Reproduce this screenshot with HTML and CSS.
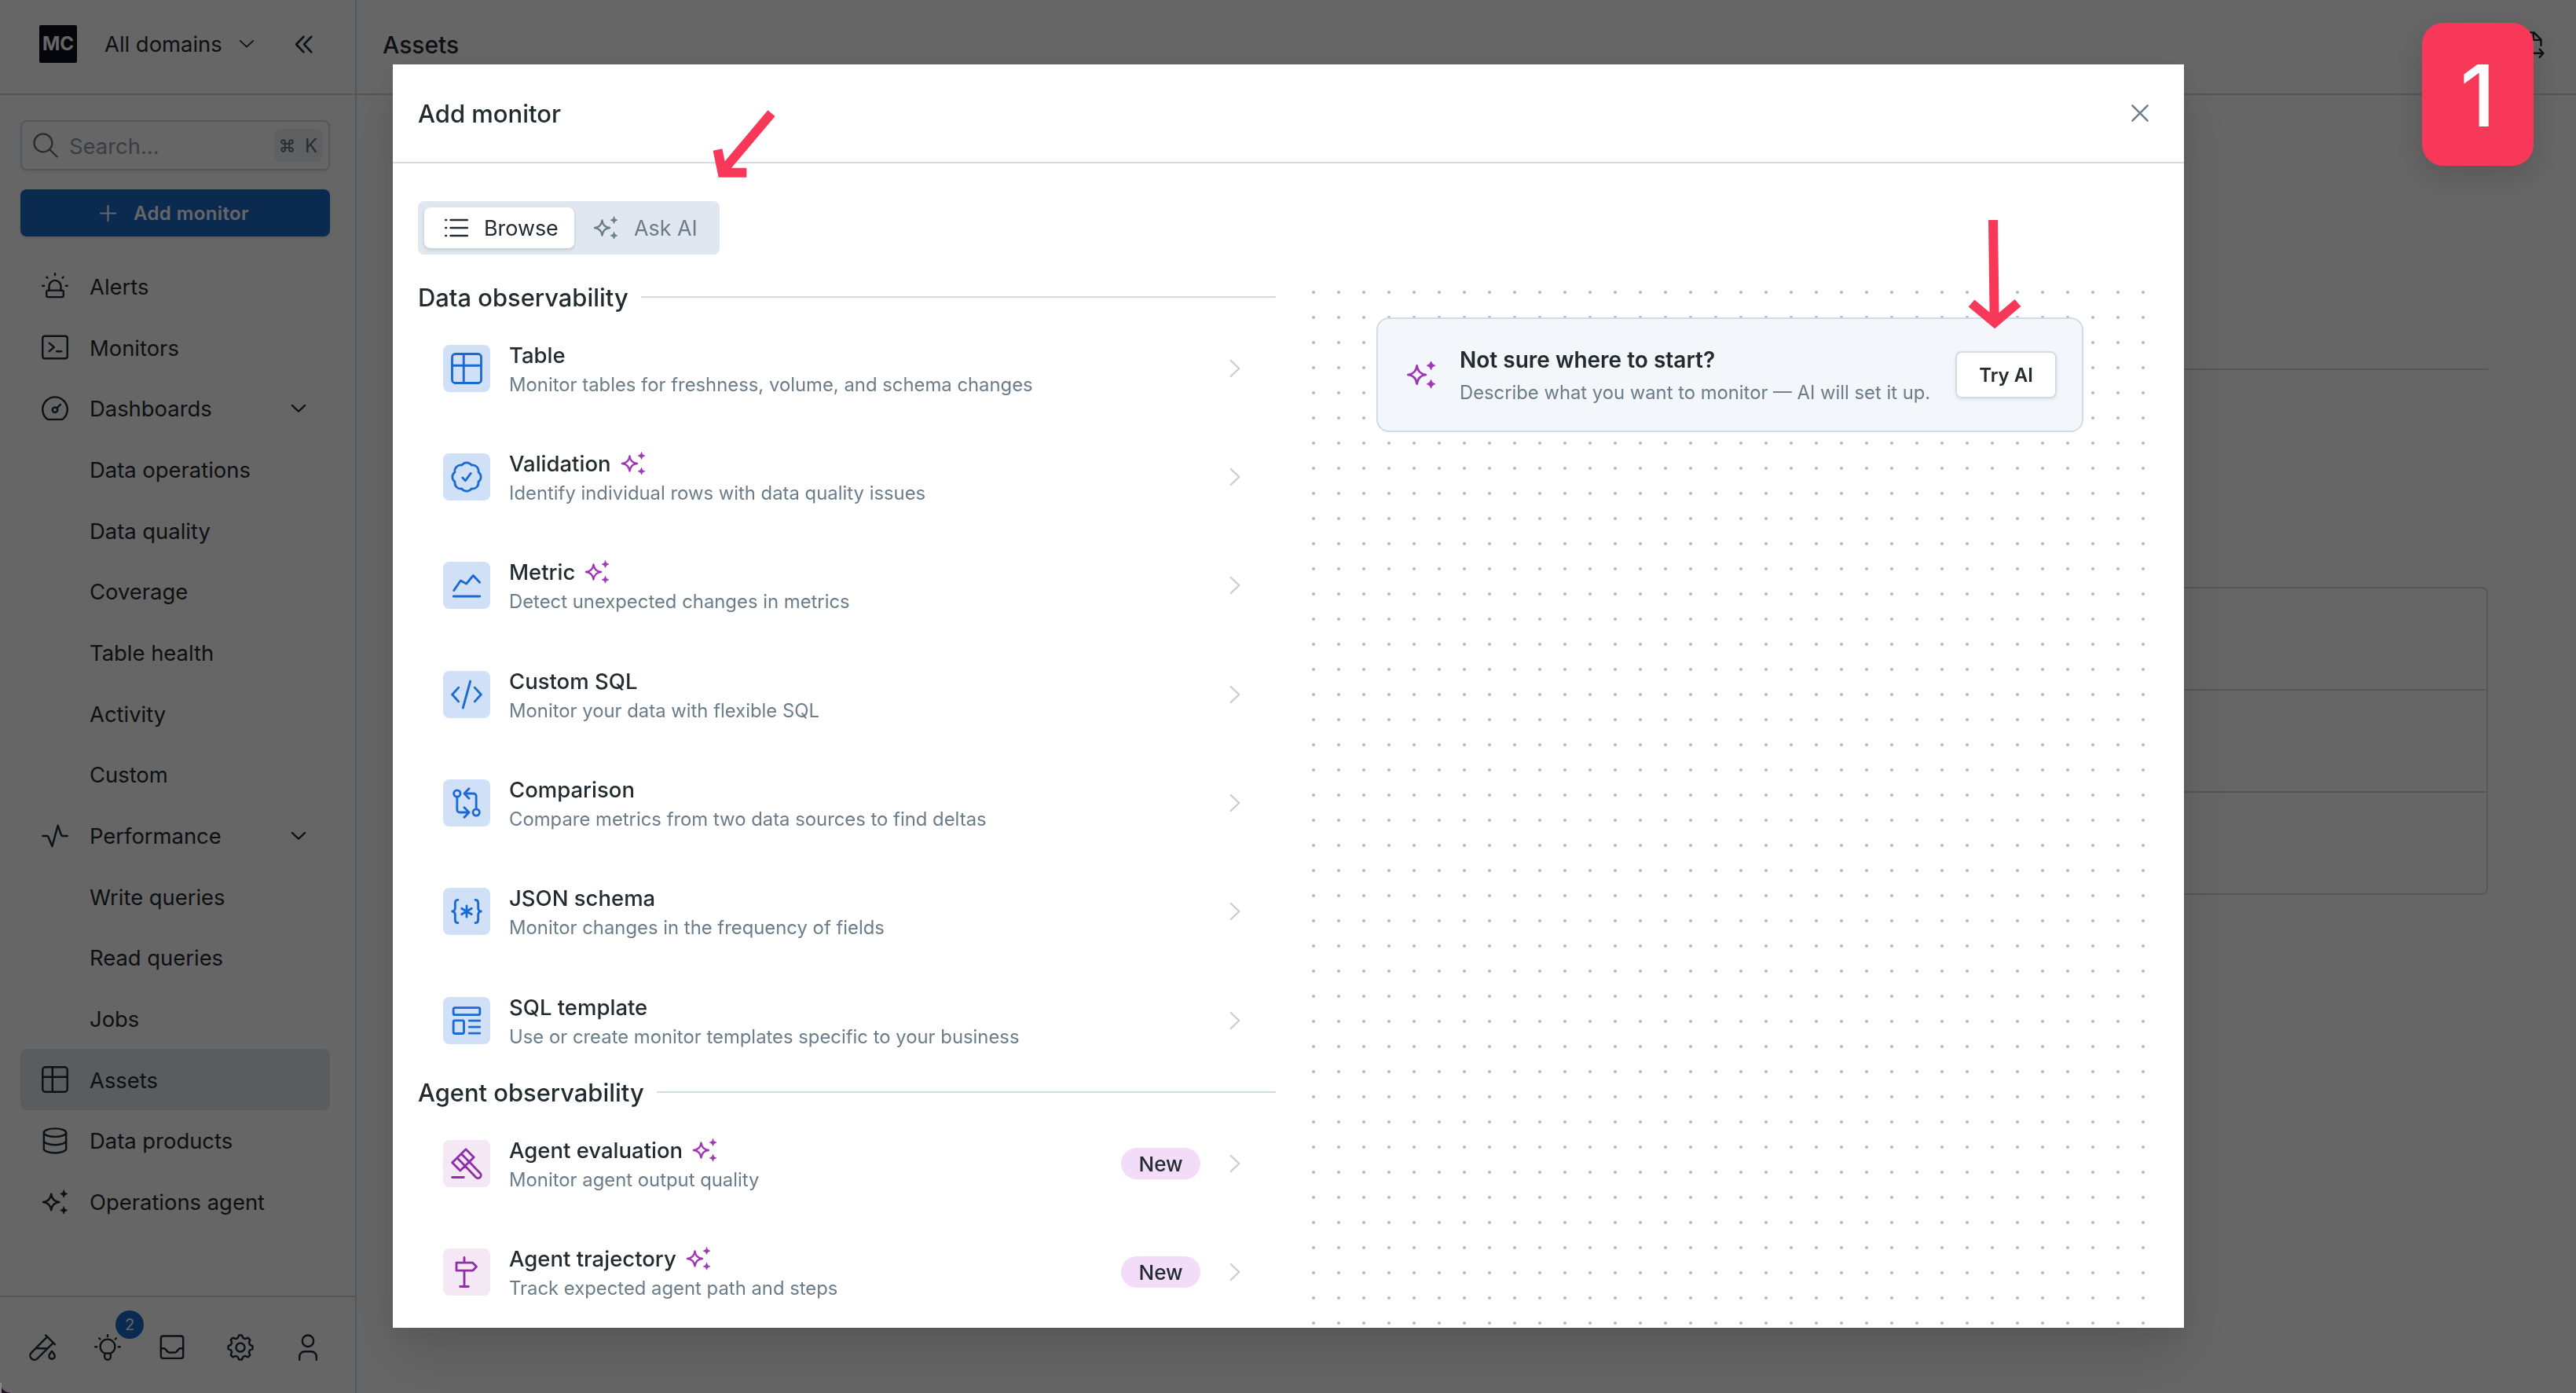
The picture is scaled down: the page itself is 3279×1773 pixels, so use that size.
FILE: index.html
```html
<!DOCTYPE html>
<html lang="en">
<head>
    <meta charset="UTF-8">
    <meta name="viewport" content="width=device-width, initial-scale=1.0">
    <title>Assets - Add monitor</title>
    <link rel="stylesheet" href="styles.css">
</head>
<body>
    <!-- Icon sprite -->
    <svg class="sprite" xmlns="http://www.w3.org/2000/svg">
        <symbol id="i-sparkle" viewBox="0 0 24 24">
            <path d="M8.6 4.7C9.1 9 11.4 11.5 15.8 12 11.4 12.5 9.1 15 8.6 19.3 8.1 15 5.8 12.5 1.4 12 5.8 11.5 8.1 9 8.6 4.7Z"/>
            <path class="solid" d="M19.9 1.4c.5 2 1.2 2.7 3.2 3.2-2 .5-2.7 1.2-3.2 3.2-.5-2-1.2-2.7-3.2-3.2 2-.5 2.7-1.2 3.2-3.2z"/>
            <path class="solid" d="M19.9 16.2c.5 2 1.2 2.7 3.2 3.2-2 .5-2.7 1.2-3.2 3.2-.5-2-1.2-2.7-3.2-3.2 2-.5 2.7-1.2 3.2-3.2z"/>
        </symbol>
        <symbol id="i-table" viewBox="0 0 24 24">
            <rect x=".9" y=".9" width="22.2" height="22.2" rx="2.4"/>
            <path d="M9.75 1v22M1 9.75h22"/>
        </symbol>
        <symbol id="i-down" viewBox="0 0 24 24"><path d="M3 7.5l9 8.5 9-8.5"/></symbol>
        <symbol id="i-right" viewBox="0 0 24 24"><path d="M8 4.5l8 7.5-8 7.5"/></symbol>
        <symbol id="i-collapse" viewBox="0 0 24 24"><path d="M12 2.5L3 12l9 9.5M21.5 2.5l-9 9.5 9 9.5"/></symbol>
        <symbol id="i-search" viewBox="0 0 24 24"><circle cx="9.7" cy="9.7" r="8.6"/><path d="M15.9 15.9l7 7"/></symbol>
        <symbol id="i-plus" viewBox="0 0 24 24"><path d="M12 1v22M1 12h22"/></symbol>
        <symbol id="i-close" viewBox="0 0 24 24"><path d="M1.5 1.5l21 21M22.5 1.5l-21 21"/></symbol>
        <symbol id="i-alert" viewBox="0 0 24 24">
            <path d="M6.7 16v-3.700a5.300 5.300 0 0 1 10.600 0V16"/>
            <rect x="4.400" y="16" width="15.200" height="6" rx="1.500"/>
            <path d="M12 .9v1.300M4.500 4l.7.7M19.500 4l-.7.7M.9 11.800h1.300M21.800 11.800h1.300"/>
        </symbol>
        <symbol id="i-terminal" viewBox="0 0 24 24">
            <rect x=".9" y="1.900" width="22.200" height="20.200" rx="2"/>
            <path d="M6.800 8.200l4.400 3.700-4.400 3.700M13.400 15.700h4.400"/>
        </symbol>
        <symbol id="i-gauge" viewBox="0 0 24 24">
            <path d="M5.500 21.800A11.100 11.100 0 1 1 18.500 21.800Z"/>
            <circle cx="12" cy="13.200" r="2.300"/><path d="M13.700 11.500l3.200-3.200"/>
        </symbol>
        <symbol id="i-pulse" viewBox="0 0 24 24"><path d="M.9 12h3.700c.7 0 1.200.3 1.500 1l3.400 8.300L14.600 2.600l2.900 8.300c.3.700.8 1.100 1.500 1.100h4.100"/></symbol>
        <symbol id="i-database" viewBox="0 0 24 24">
            <ellipse cx="12" cy="4.700" rx="10" ry="3.700"/>
            <path d="M2 4.700v14.500c0 2 4.500 3.700 10 3.700s10-1.700 10-3.700V4.700M2 12c0 2 4.500 3.700 10 3.700s10-1.700 10-3.700"/>
        </symbol>
        <symbol id="i-tube" viewBox="0 0 24 24">
            <path d="M14.900 1l8.300 8.300M16.300 2.400L2 16.800a3.750 3.750 0 0 0 5.300 5.300L21.700 7.800M7.300 12.900h9.200"/>
            <path d="M20.500 15.400c1.500 1.800 2.600 3 2.600 4.400a2.600 2.600 0 0 1-5.200 0c0-1.400 1.100-2.600 2.600-4.400z"/>
        </symbol>
        <symbol id="i-bulb" viewBox="0 0 24 24">
            <path d="M9.300 17.300a6.600 6.600 0 1 1 5.400 0zM9.300 17.300v3.200a2.700 2.500 0 0 0 5.400 0v-3.200"/>
            <path d="M12 .9v1.200M4.300 3.700l.9.900M19.700 3.700l-.9.900M.9 11.500h1.300M21.800 11.500h1.300"/>
        </symbol>
        <symbol id="i-inbox" viewBox="0 0 24 24">
            <rect x="2" y="1.800" width="20" height="20" rx="2"/>
            <path d="M2 12.900h2.800c1 0 1.300.6 1.900 1.400 1 1.500 1.800 2.300 3.200 2.300h4.200c1.400 0 2.200-.8 3.200-2.300.6-.8.900-1.400 1.900-1.400H22"/>
        </symbol>
        <symbol id="i-gear" viewBox="0 0 24 24">
            <circle cx="12" cy="12" r="3.900"/>
            <path d="M22.920 10.660L22.920 13.340 20.460 14.430 19.700 16.270 20.670 18.770 18.770 20.670 16.270 19.700 14.430 20.460 13.340 22.920 10.660 22.920 9.570 20.460 7.730 19.700 5.230 20.670 3.330 18.770 4.300 16.270 3.540 14.430 1.080 13.340 1.080 10.660 3.540 9.570 4.300 7.730 3.330 5.230 5.230 3.330 7.730 4.300 9.570 3.540 10.660 1.080 13.340 1.080 14.430 3.540 16.270 4.300 18.770 3.330 20.670 5.230 19.700 7.730 20.460 9.570Z"/>
        </symbol>
        <symbol id="i-user" viewBox="0 0 24 24">
            <circle cx="12" cy="6.200" r="5.100"/>
            <path d="M4.400 23.200v-3a4.500 4.500 0 0 1 4.500-4.500h6.200a4.500 4.500 0 0 1 4.500 4.500v3"/>
        </symbol>
        <symbol id="i-export" viewBox="0 0 24 24">
            <path d="M9 22H2.500V1h12l6.300 6.300V12.500M14 1v6.700h6.500M10 19.600h12.800M19.500 16l3.400 3.600-3.400 3.600"/>
        </symbol>
        <symbol id="i-list" viewBox="0 0 24 24"><path d="M6 4h17.200M6 12h17.200M6 20h17.200M1 4h.6M1 12h.6M1 20h.6"/></symbol>
        <symbol id="i-badge" viewBox="2.100 2.100 19.800 19.800">
            <path class="fine" d="M9.400 12.500l1.800 1.900 3.400-4.700M21 12c0 1.268-.63 2.390-1.593 3.068a3.745 3.745 0 0 1-1.043 3.296 3.745 3.745 0 0 1-3.296 1.043A3.745 3.745 0 0 1 12 21c-1.268 0-2.390-.63-3.068-1.593a3.746 3.746 0 0 1-3.296-1.043 3.745 3.745 0 0 1-1.043-3.296A3.745 3.745 0 0 1 3 12c0-1.268.63-2.390 1.593-3.068a3.745 3.745 0 0 1 1.043-3.296 3.746 3.746 0 0 1 3.296-1.043A3.746 3.746 0 0 1 12 3c1.268 0 2.390.63 3.068 1.593a3.746 3.746 0 0 1 3.296 1.043 3.746 3.746 0 0 1 1.043 3.296A3.745 3.745 0 0 1 21 12Z"/>
        </symbol>
        <symbol id="i-chart" viewBox="0 0 24 24"><path d="M2.200 16l5.200-7.600 4.400 2.400L17 4.500l5 5.200M1.900 20.400h20.200"/></symbol>
        <symbol id="i-code" viewBox="0 0 24 24"><path d="M5.800 6.700L1 12l4.800 5.300M18.200 6.700L23 12l-4.800 5.300M14.800 1.800L9.200 22.200"/></symbol>
        <symbol id="i-compare" viewBox="0 0 24 24">
            <circle cx="4.700" cy="4.800" r="2.500"/><circle cx="19.300" cy="19.200" r="2.500"/>
            <path d="M4.700 7.300v9.900a2 2 0 0 0 2 2h6.800M10.200 15.500l3.600 3.700-3.600 3.700M19.300 16.700V6.800a2 2 0 0 0-2-2h-6.800M13.800 1.100l-3.600 3.700 3.600 3.700"/>
        </symbol>
        <symbol id="i-json" viewBox="0 0 24 24">
            <path d="M5.400 3.200c-1.700 0-2.200.9-2.200 2.400v4c0 1.400-.9 2.400-2.200 2.400 1.300 0 2.200 1 2.200 2.400v4c0 1.500.5 2.400 2.200 2.400M18.600 3.200c1.700 0 2.200.9 2.200 2.400v4c0 1.400.9 2.400 2.200 2.400-1.300 0-2.200 1-2.200 2.400v4c0 1.500-.5 2.400-2.200 2.400M12 7.700v8.600M8.200 9.700l7.600 4.600M15.800 9.700l-7.600 4.600"/>
        </symbol>
        <symbol id="i-template" viewBox="0 0 24 24">
            <rect x="1.900" y="2.200" width="20.200" height="5.400" rx="1"/><rect x="1.900" y="11.900" width="8" height="10" rx="1"/>
            <path d="M14 12.100h8M14 16.900h8M14 21.700h8"/>
        </symbol>
        <symbol id="i-gavel" viewBox="0 0 24 24">
            <path d="M11.400 1.100L17.500 7.200 14 10.600 7.900 4.500ZM4.700 7.700L10.800 13.800 7.100 17.400 1 11.300ZM7.900 4.500L4.700 7.700M14 10.600l8.300 8.700a2.250 2.250 0 0 1-3.200 3.200L10.800 13.800M14 10.600l-3.200 3.200M1 22.500h8.800"/>
        </symbol>
        <symbol id="i-sign" viewBox="0 0 24 24"><path d="M4.200 4.900h12.400l2.900 3-2.900 3H4.200ZM10.200.9v4M10.200 10.900v12M7 23.100h6.400"/></symbol>
    </svg>

    <div class="app">
        <nav class="sidebar">
            <div class="sidebar-top">
                <div class="logo">MC</div>
                <span class="domain">All domains</span>
                <svg class="icon domain-arrow"><use href="#i-down"/></svg>
                <svg class="icon collapse"><use href="#i-collapse"/></svg>
            </div>
            <div class="sidebar-body">
                <div class="search">
                    <svg class="icon"><use href="#i-search"/></svg>
                    <span class="placeholder">Search...</span>
                    <span class="kbd"><svg class="cmd" viewBox="0 0 16 16"><path d="M5.500 5.500h5v5h-5zM5.500 5.500H3.300a2.200 2.200 0 1 1 2.200-2.200zM10.500 5.500V3.300a2.200 2.200 0 1 1 2.200 2.200zM10.500 10.500h2.200a2.200 2.200 0 1 1-2.200 2.200zM5.500 10.500v2.200a2.200 2.200 0 1 1-2.200-2.200z"/></svg><span>K</span></span>
                </div>
                <div class="add-btn"><svg class="icon"><use href="#i-plus"/></svg>Add monitor</div>
                <ul class="menu">
                    <li><svg class="icon"><use href="#i-alert"/></svg>Alerts</li>
                    <li><svg class="icon"><use href="#i-terminal"/></svg>Monitors</li>
                    <li><svg class="icon"><use href="#i-gauge"/></svg>Dashboards<svg class="icon arrow"><use href="#i-down"/></svg></li>
                    <li class="sub">Data operations</li>
                    <li class="sub">Data quality</li>
                    <li class="sub">Coverage</li>
                    <li class="sub">Table health</li>
                    <li class="sub">Activity</li>
                    <li class="sub">Custom</li>
                    <li><svg class="icon"><use href="#i-pulse"/></svg>Performance<svg class="icon arrow"><use href="#i-down"/></svg></li>
                    <li class="sub">Write queries</li>
                    <li class="sub">Read queries</li>
                    <li class="sub">Jobs</li>
                    <li class="active"><svg class="icon"><use href="#i-table"/></svg>Assets</li>
                    <li><svg class="icon"><use href="#i-database"/></svg>Data products</li>
                    <li><svg class="icon"><use href="#i-sparkle"/></svg>Operations agent</li>
                </ul>
            </div>
            <div class="sidebar-bottom">
                <svg class="icon"><use href="#i-tube"/></svg>
                <div class="tips"><svg class="icon"><use href="#i-bulb"/></svg><span class="count">2</span></div>
                <svg class="icon"><use href="#i-inbox"/></svg>
                <svg class="icon"><use href="#i-gear"/></svg>
                <svg class="icon"><use href="#i-user"/></svg>
            </div>
        </nav>
        <main class="main">
            <header class="main-top">
                <h1>Assets</h1>
                <svg class="icon"><use href="#i-export"/></svg>
            </header>
            <div class="main-body">
                <div class="rule"></div>
                <div class="rows"><div></div><div></div><div></div></div>
            </div>
        </main>
    </div>

    <div class="overlay">
        <div class="modal">
            <div class="modal-head">
                <h2>Add monitor</h2>
                <svg class="icon close"><use href="#i-close"/></svg>
            </div>
            <div class="modal-body">
                <div class="toggle">
                    <div class="tab selected"><svg class="icon list"><use href="#i-list"/></svg>Browse</div>
                    <div class="tab"><svg class="icon"><use href="#i-sparkle"/></svg>Ask AI</div>
                </div>
                <div class="columns">
                    <div class="types">
                        <div class="section"><h3>Data observability</h3></div>
                        <div class="type">
                            <div class="tile"><svg class="icon"><use href="#i-table"/></svg></div>
                            <div class="text"><h4>Table</h4><p>Monitor tables for freshness, volume, and schema changes</p></div>
                            <svg class="icon go"><use href="#i-right"/></svg>
                        </div>
                        <div class="type">
                            <div class="tile"><svg class="icon"><use href="#i-badge"/></svg></div>
                            <div class="text"><h4>Validation <svg class="icon ai"><use href="#i-sparkle"/></svg></h4><p>Identify individual rows with data quality issues</p></div>
                            <svg class="icon go"><use href="#i-right"/></svg>
                        </div>
                        <div class="type">
                            <div class="tile"><svg class="icon"><use href="#i-chart"/></svg></div>
                            <div class="text"><h4>Metric <svg class="icon ai"><use href="#i-sparkle"/></svg></h4><p>Detect unexpected changes in metrics</p></div>
                            <svg class="icon go"><use href="#i-right"/></svg>
                        </div>
                        <div class="type">
                            <div class="tile"><svg class="icon"><use href="#i-code"/></svg></div>
                            <div class="text"><h4>Custom SQL</h4><p>Monitor your data with flexible SQL</p></div>
                            <svg class="icon go"><use href="#i-right"/></svg>
                        </div>
                        <div class="type">
                            <div class="tile"><svg class="icon"><use href="#i-compare"/></svg></div>
                            <div class="text"><h4>Comparison</h4><p>Compare metrics from two data sources to find deltas</p></div>
                            <svg class="icon go"><use href="#i-right"/></svg>
                        </div>
                        <div class="type">
                            <div class="tile"><svg class="icon"><use href="#i-json"/></svg></div>
                            <div class="text"><h4>JSON schema</h4><p>Monitor changes in the frequency of fields</p></div>
                            <svg class="icon go"><use href="#i-right"/></svg>
                        </div>
                        <div class="type">
                            <div class="tile"><svg class="icon"><use href="#i-template"/></svg></div>
                            <div class="text"><h4>SQL template</h4><p>Use or create monitor templates specific to your business</p></div>
                            <svg class="icon go"><use href="#i-right"/></svg>
                        </div>
                        <div class="section"><h3>Agent observability</h3></div>
                        <div class="type agent">
                            <div class="tile"><svg class="icon"><use href="#i-gavel"/></svg></div>
                            <div class="text"><h4>Agent evaluation <svg class="icon ai"><use href="#i-sparkle"/></svg></h4><p>Monitor agent output quality</p></div>
                            <span class="new">New</span>
                            <svg class="icon go"><use href="#i-right"/></svg>
                        </div>
                        <div class="type agent">
                            <div class="tile"><svg class="icon"><use href="#i-sign"/></svg></div>
                            <div class="text"><h4>Agent trajectory <svg class="icon ai"><use href="#i-sparkle"/></svg></h4><p>Track expected agent path and steps</p></div>
                            <span class="new">New</span>
                            <svg class="icon go"><use href="#i-right"/></svg>
                        </div>
                    </div>
                    <div class="canvas">
                        <div class="hint">
                            <svg class="icon"><use href="#i-sparkle"/></svg>
                            <div class="hint-text">
                                <h4>Not sure where to start?</h4>
                                <p>Describe what you want to monitor — AI will set it up.</p>
                            </div>
                            <div class="try-btn">Try AI</div>
                        </div>
                    </div>
                </div>
            </div>
        </div>
    </div>

    <!-- Callouts -->
    <svg class="mark mark-ask" viewBox="0 0 90 90"><path d="M81 4.200L17 80M12.500 50.500L18.500 79.800H49.300"/></svg>
    <svg class="mark mark-try" viewBox="0 0 80 150"><path d="M37 10l1.700 128M9.500 116L39 140.500 68.500 115.500"/></svg>
    <div class="step">1</div>
    <div class="corner"></div>
</body>
</html>
```
FILE: styles.css
```css
* {
    box-sizing: border-box;
    margin: 0;
    padding: 0;
}
body {
    font-family: Inter, "Liberation Sans", sans-serif;
    font-size: 27.4px;
    color: #222b30;
    background: #fff;
    width: 3279px;
    height: 1773px;
    overflow: hidden;
}
.sprite {
    display: none;
}
.icon {
    width: 34px;
    height: 34px;
    flex: none;
    fill: none;
    stroke: currentColor;
    stroke-width: 1.7;
    stroke-linecap: round;
    stroke-linejoin: round;
    overflow: visible;
}
.solid {
    fill: currentColor;
    stroke-width: 0.7;
}
.fine {
    stroke-width: 1.35;
}

/* Sidebar */
.app {
    display: flex;
    height: 1773px;
}
.sidebar {
    width: 454px;
    border-right: 2px solid #d0dce8;
    display: flex;
    flex-direction: column;
}
.sidebar-top {
    height: 121px;
    border-bottom: 2px solid #d0dce8;
    display: flex;
    align-items: center;
    padding: 0 50px 7px;
}
.logo {
    width: 48px;
    height: 48px;
    border-radius: 2px;
    background: #0b1120;
    color: #fff;
    font-size: 24px;
    font-weight: 700;
    line-height: 48px;
    text-align: center;
}
.domain {
    margin-left: 35px;
    width: 170px;
    white-space: nowrap;
}
.domain-arrow {
    width: 22px;
    height: 22px;
    stroke-width: 2;
}
.collapse {
    width: 25px;
    height: 25px;
    margin-left: 49px;
    stroke-width: 2.5;
}
.sidebar-body {
    flex: 1;
    padding: 32px 32px 0 26px;
}
.search {
    height: 64px;
    border: 2px solid #d0dce8;
    border-radius: 8px;
    box-shadow: 0 2px 4px rgba(0,0,0,0.08);
    display: flex;
    align-items: center;
    padding: 0 8px 0 14px;
}
.search .icon {
    width: 32px;
    height: 32px;
    color: #5d6f80;
}
.placeholder {
    flex: 1;
    margin-left: 14px;
    padding-top: 2px;
    color: #8d9cab;
}
.kbd {
    width: 61px;
    height: 42px;
    border-radius: 8px;
    background: #edf0f5;
    color: #5d6f80;
    font-size: 24px;
    display: flex;
    align-items: center;
    justify-content: space-between;
    padding: 0 6px 0 8px;
}
.cmd {
    width: 17px;
    height: 17px;
    fill: none;
    stroke: currentColor;
    stroke-width: 1.8;
}
.add-btn {
    height: 60px;
    margin-top: 24px;
    border-radius: 8px;
    background: #196ac8;
    box-shadow: 0 2px 4px rgba(0,0,0,0.12);
    color: #fff;
    font-size: 24px;
    font-weight: 600;
    letter-spacing: 0.4px;
    display: flex;
    align-items: center;
    justify-content: center;
    gap: 22px;
    padding-right: 2px;
}
.add-btn .icon {
    width: 21px;
    height: 21px;
    stroke-width: 2.5;
}
.menu {
    list-style: none;
    margin-top: 24px;
}
.menu li {
    height: 77.7px;
    border-radius: 8px;
    display: flex;
    align-items: center;
    padding: 2px 29px 0 27px;
}
.menu .icon {
    margin: -1px 27px 0 0;
}
.menu .sub {
    padding-left: 88px;
}
.menu .active {
    background: #dfe8ef;
}
.menu .arrow {
    width: 22px;
    height: 22px;
    margin: 0 0 0 auto;
    stroke-width: 2.4;
}
.sidebar-bottom {
    height: 124px;
    border-top: 2px solid #d0dce8;
    display: grid;
    grid-template-columns: 83px 82px 87px 86px 34px;
    align-items: center;
    padding: 6px 0 0 37px;
}
.tips {
    position: relative;
    height: 34px;
}
.count {
    position: absolute;
    left: 27px;
    top: -30px;
    width: 36px;
    height: 36px;
    border-radius: 50%;
    background: #196ac8;
    color: #fff;
    font-size: 20px;
    line-height: 36px;
    text-align: center;
}

/* Page behind the dialog */
.main {
    flex: 1;
}
.main-top {
    height: 121px;
    border-bottom: 2px solid #d0dce8;
    display: flex;
    align-items: center;
    justify-content: space-between;
    padding: 0 40px 5px 33px;
}
.main-top h1 {
    font-size: 30px;
    font-weight: 500;
}
.main-body {
    padding: 348px 112px 0;
}
.rule {
    height: 2px;
    background: #d0dce8;
    margin-bottom: 276px;
}
.rows {
    border: 2px solid #d0dce8;
    border-radius: 8px;
}
.rows div {
    height: 128px;
}
.rows div + div {
    height: 130px;
    border-top: 2px solid #d0dce8;
}

/* Dialog */
.overlay {
    position: fixed;
    inset: 0;
    background: rgba(0,0,0,0.6);
    padding: 82px 499px 83px 500px;
}
.modal {
    height: 1608px;
    background: #fff;
    box-shadow: 0 40px 80px rgba(0,0,0,0.12), 0 10px 30px rgba(0,0,0,0.08);
    overflow: hidden;
}
.modal-head {
    height: 126px;
    border-bottom: 2px solid #d0dce8;
    display: flex;
    align-items: center;
    justify-content: space-between;
    padding: 0 45px 0 32px;
}
.modal-head h2, .section h3 {
    font-size: 31px;
    font-weight: 500;
}
.section h3 {
    font-size: 30.9px;
    padding-top: 2px;
}
.close {
    width: 22px;
    height: 22px;
    color: #6b7c8a;
    stroke-width: 2.6;
}
.modal-body {
    padding: 48px 32px 0;
}
.toggle {
    width: 384px;
    height: 68px;
    padding: 8px;
    border-radius: 8px;
    background: #e0e7ee;
    display: flex;
}
.tab {
    display: flex;
    align-items: center;
    gap: 20px;
    padding-left: 24px;
    height: 52px;
    font-size: 26.9px;
    color: #6b7c8a;
}
.tab .icon {
    width: 32px;
    height: 32px;
}
.tab.selected {
    width: 191px;
    padding-left: 26px;
    border-radius: 8px;
    background: #fff;
    color: #222b30;
    box-shadow: 0 2px 4px rgba(0,0,0,0.14);
}
.tab .list {
    width: 30px;
    height: 30px;
    stroke-width: 2;
}
.columns {
    display: grid;
    grid-template-columns: 1092px 1092px;
    gap: 32px;
    margin-top: 32px;
}
.section {
    height: 43.66px;
    display: flex;
    align-items: center;
    gap: 16px;
}
.section::after {
    content: "";
    flex: 1;
    height: 2px;
    background: #d0dce8;
}
.type {
    height: 138.33px;
    display: flex;
    align-items: center;
    padding: 0 36px 0 32px;
}
.tile {
    width: 60px;
    height: 60px;
    margin-right: 24px;
    border-radius: 8px;
    background: #d0e0f6;
    color: #1b6ad1;
    display: flex;
    align-items: center;
    justify-content: center;
}
.tile .icon {
    width: 40px;
    height: 40px;
}
.agent .tile {
    background: #f4e8f5;
    color: #8f2fa8;
}
.text {
    flex: 1;
    padding-top: 4px;
}
.text h4 {
    font-size: 27.5px;
    font-weight: 500;
    line-height: 38px;
    display: flex;
    align-items: center;
    gap: 12px;
}
.text p {
    font-size: 23.85px;
    line-height: 38px;
    color: #6b7c8a;
}
.ai {
    width: 32px;
    height: 32px;
    color: #a035b8;
}
.go {
    width: 32px;
    height: 32px;
    color: #ccc;
}
.new {
    width: 101px;
    height: 40px;
    margin-right: 28px;
    border-radius: 20px;
    background: #f3dcf8;
    font-size: 26px;
    font-weight: 500;
    line-height: 41px;
    text-align: center;
}
.canvas {
    height: 1334px;
    background-image: radial-gradient(circle, #b0c0cf 1.6px, transparent 2.4px);
    background-size: 32px 32px;
    padding-top: 48px;
}
.hint {
    width: 900px;
    height: 146px;
    margin: 0 auto;
    border: 2px solid #d0dce8;
    border-radius: 16px;
    background: #f3f6fa;
    display: flex;
    align-items: center;
    padding: 0 32px 0 36px;
}
.hint .icon {
    width: 38px;
    height: 38px;
    color: #a035b8;
}
.hint-text {
    flex: 1;
    margin-left: 30px;
    padding-top: 3px;
    white-space: nowrap;
}
.hint h4 {
    font-size: 28px;
    font-weight: 600;
    line-height: 42px;
}
.hint p {
    font-size: 23.8px;
    line-height: 42px;
    color: #6b7c8a;
}
.try-btn {
    width: 129px;
    height: 60px;
    border: 2px solid #d0dce8;
    border-radius: 8px;
    background: #fff;
    box-shadow: 0 2px 4px rgba(0,0,0,0.08);
    font-size: 24px;
    font-weight: 600;
    line-height: 57px;
    text-align: center;
}

/* Callouts */
.mark {
    position: absolute;
    fill: none;
    stroke: #f73859;
    stroke-width: 12;
    overflow: visible;
}
.mark-ask {
    left: 901px;
    top: 140px;
    width: 90px;
    height: 90px;
}
.mark-try {
    left: 2500px;
    top: 270px;
    width: 80px;
    height: 150px;
}
.step {
    position: absolute;
    left: 3083px;
    top: 29px;
    width: 142px;
    height: 182px;
    border-radius: 27px;
    background: #f73859;
    box-shadow: 0 12px 36px rgba(0,0,0,0.15);
    color: #fff;
    font-size: 108px;
    font-weight: 500;
    line-height: 185px;
    text-align: center;
}
.corner {
    position: absolute;
    left: 0;
    bottom: 0;
    width: 13px;
    height: 13px;
    border-left: 2px solid #8a8a8a;
    background: radial-gradient(circle at 100% 0, transparent 12px, #2a0a2c 13px);
}
```
